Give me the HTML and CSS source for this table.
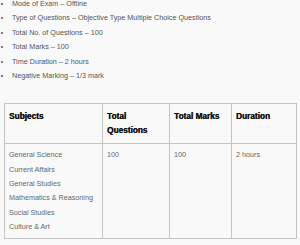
FILE: index.html
```html
<!DOCTYPE html>
<html>
<head>
<meta charset="utf-8">
<link rel="stylesheet" href="styles.css">
</head>
<body>
<ul class="info">
  <li>Mode of Exam – Offline</li>
  <li>Type of Questions – Objective Type Multiple Choice Questions</li>
  <li>Total No. of Questions – 100</li>
  <li>Total Marks – 100</li>
  <li>Time Duration – 2 hours</li>
  <li>Negative Marking – 1/3 mark</li>
</ul>
<table class="exam">
  <colgroup>
    <col class="c1"><col class="c2"><col class="c3"><col class="c4">
  </colgroup>
  <thead>
    <tr>
      <th>Subjects</th>
      <th>Total<br>Questions</th>
      <th>Total Marks</th>
      <th>Duration</th>
    </tr>
  </thead>
  <tbody>
    <tr>
      <td>General Science<br>Current Affairs<br>General Studies<br>Mathematics &amp; Reasoning<br>Social Studies<br>Culture &amp; Art</td>
      <td>100</td>
      <td>100</td>
      <td>2 hours</td>
    </tr>
  </tbody>
</table>
</body>
</html>
```
FILE: styles.css
```css
html, body {
  margin: 0;
  padding: 0;
  background: #f9f9f9;
}
body {
  font-family: "Liberation Sans", Arial, sans-serif;
  color: #555;
}
.info {
  margin: -3px 0 0 0;
  padding: 0 0 0 12px;
  font-size: 7.2px;
  line-height: 14.4px;
  list-style: disc;
}
.exam {
  margin: 20px 0 0 4px;
  width: 292px;
  border-collapse: collapse;
  table-layout: fixed;
}
.c1 { width: 98px; }
.c2 { width: 67px; }
.c3 { width: 62px; }
.c4 { width: 65px; }
.exam th, .exam td {
  border: 1px solid #c4c4c4;
  text-align: left;
  vertical-align: top;
}
.exam th {
  font-size: 8.25px;
  font-weight: bold;
  color: #111;
  line-height: 14px;
  padding: 6px 4px 5px 4px;
  height: 28px;
  text-shadow: 0.35px 0 0 #111;
}
.exam td {
  font-size: 7.2px;
  color: #666;
  line-height: 14.3px;
  padding: 4px 4px 4px 4px;
}
```
